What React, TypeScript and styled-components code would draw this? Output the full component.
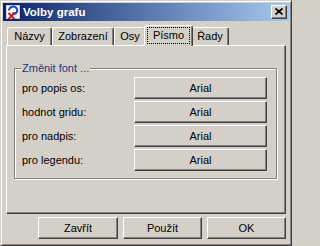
import React from 'react';
import styled, { createGlobalStyle } from 'styled-components';

const Global = createGlobalStyle`
  html, body { margin: 0; padding: 0; background: #D4D0C8; }
  body { font-family: "Liberation Sans", Arial, sans-serif; font-size: 11px; color: #000; }
  * { box-sizing: border-box; }
`;

const Window = styled.div`
  width: 292px;
  height: 246px;
  background: #D4D0C8;
  border: 1px solid;
  border-color: #D4D0C8 #404040 #404040 #D4D0C8;
  box-shadow: inset 1px 1px 0 #fff, inset -1px -1px 0 #808080;
  padding: 2px;
  display: flex;
  flex-direction: column;
`;

const TitleBar = styled.div`
  height: 18px;
  flex: none;
  display: flex;
  align-items: center;
  padding: 0 2px;
  background: linear-gradient(to right, #0A246A, #A6CAF0);
`;

const TitleText = styled.span`
  margin-left: 2px;
  flex: 1;
  color: #fff;
  font-weight: bold;
  font-size: 11.5px;
  line-height: 18px;
  white-space: nowrap;
`;

const CloseButton = styled.div`
  width: 16px;
  height: 14px;
  background: #D4D0C8;
  border: 1px solid;
  border-color: #fff #404040 #404040 #fff;
  box-shadow: inset -1px -1px 0 #808080;
  display: flex;
  align-items: center;
  justify-content: center;
  padding: 0 1px 1px 0;
`;

const Body = styled.div`
  flex: 1;
  display: flex;
  flex-direction: column;
  padding: 4px 3px 4px 3px;
`;

const TabStrip = styled.div`
  height: 20px;
  flex: none;
  display: flex;
  align-items: flex-end;
  padding-left: 1px;
  position: relative;
  z-index: 1;
`;

const Tab = styled.div<{ $w: number; $active?: boolean }>`
  position: relative;
  width: ${p => (p.$active ? p.$w + 4 : p.$w)}px;
  height: ${p => (p.$active ? 21 : 18)}px;
  margin: ${p => (p.$active ? '0 -2px -1px -2px' : '0')};
  z-index: ${p => (p.$active ? 2 : 1)};
  background: #D4D0C8;
  border: 1px solid;
  border-bottom: none;
  border-color: #fff #404040 transparent #fff;
  border-radius: 3px 3px 0 0;
  box-shadow: inset -1px 0 0 #808080;
  display: flex;
  align-items: ${p => (p.$active ? 'flex-start' : 'center')};
  justify-content: center;
  padding-bottom: 1px;
  line-height: 13px;
  white-space: nowrap;
`;

const FocusBox = styled.div`
  flex: 1;
  height: 17px;
  margin: 1px 2px 0 2px;
  border: 1px dotted #000;
  display: flex;
  align-items: center;
  justify-content: center;
`;

const Panel = styled.div`
  flex: 1;
  border: 1px solid;
  border-color: #fff #404040 #404040 #fff;
  box-shadow: inset -1px -1px 0 #808080;
  padding: 22px 8px 0 7px;
`;

const Group = styled.div`
  position: relative;
  height: 111px;
  border: 1px solid #808080;
  box-shadow: inset 1px 1px 0 #fff, 1px 1px 0 #fff;
  padding: 8px 9px 0 7px;
  display: grid;
  grid-template-columns: 1fr 133px;
  grid-auto-rows: 22px;
  row-gap: 2px;
  align-content: start;
`;

const GroupLabel = styled.span`
  position: absolute;
  left: 6px;
  top: -8px;
  padding: 0 1px;
  background: #D4D0C8;
  color: #1b3583;
  line-height: 14px;
`;

const RowLabel = styled.span`
  display: flex;
  align-items: center;
  white-space: nowrap;
`;

const Button = styled.button<{ $w?: number }>`
  width: ${p => (p.$w ? `${p.$w}px` : '100%')};
  height: 22px;
  margin: 0;
  padding: 0 0 1px 0;
  font: inherit;
  font-size: 11px;
  color: #000;
  background: #D4D0C8;
  border: 1px solid;
  border-color: #fff #404040 #404040 #fff;
  box-shadow: inset -1px -1px 0 #808080;
  border-radius: 0;
  display: flex;
  align-items: center;
  justify-content: center;
`;

const ButtonRow = styled.div`
  flex: none;
  margin-top: 3px;
  display: flex;
  justify-content: flex-end;
  gap: 5px;
`;

const AppIcon = () => (
  <svg width="16" height="16" viewBox="0 0 16 16">
    <rect x="0.5" y="0.5" width="15" height="15" fill="#fff" stroke="#14226e" />
    <rect x="1.5" y="1.5" width="13" height="13" fill="none" stroke="#c8d0e8" />
    <path d="M4 6.5 A4.2 4.2 0 0 1 12 5 A4.2 4.2 0 0 1 9.5 10" fill="none" stroke="#1d4cc9" strokeWidth="2" />
    <path d="M7 8.5 L11 8 L9.5 11.5 Z" fill="#1d4cc9" />
    <path d="M3.5 9 L9.5 15 M9.5 9 L3.5 15" stroke="#d01010" strokeWidth="1.8" />
  </svg>
);

const CloseGlyph = () => (
  <svg width="8" height="7" viewBox="0 0 8 7">
    <path d="M0.5 0.5 L7.5 6.5 M7.5 0.5 L0.5 6.5" stroke="#000" strokeWidth="1.7" />
  </svg>
);

const tabs = [
  { label: 'Názvy', w: 45 },
  { label: 'Zobrazení', w: 62 },
  { label: 'Osy', w: 32 },
  { label: 'Písmo', w: 45, active: true },
  { label: 'Řady', w: 38 },
];

const rows = ['pro popis os:', 'hodnot gridu:', 'pro nadpis:', 'pro legendu:'];

export default function App() {
  return (
    <>
      <Global />
      <Window>
        <TitleBar>
          <AppIcon />
          <TitleText>Volby grafu</TitleText>
          <CloseButton>
            <CloseGlyph />
          </CloseButton>
        </TitleBar>
        <Body>
          <TabStrip>
            {tabs.map(t => (
              <Tab key={t.label} $w={t.w} $active={t.active}>
                {t.active ? <FocusBox>{t.label}</FocusBox> : t.label}
              </Tab>
            ))}
          </TabStrip>
          <Panel>
            <Group>
              <GroupLabel>Změnit font ...</GroupLabel>
              {rows.map(r => (
                <React.Fragment key={r}>
                  <RowLabel>{r}</RowLabel>
                  <Button>Arial</Button>
                </React.Fragment>
              ))}
            </Group>
          </Panel>
          <ButtonRow>
            <Button $w={80}>Zavřít</Button>
            <Button $w={79}>Použít</Button>
            <Button $w={79}>OK</Button>
          </ButtonRow>
        </Body>
      </Window>
    </>
  );
}
